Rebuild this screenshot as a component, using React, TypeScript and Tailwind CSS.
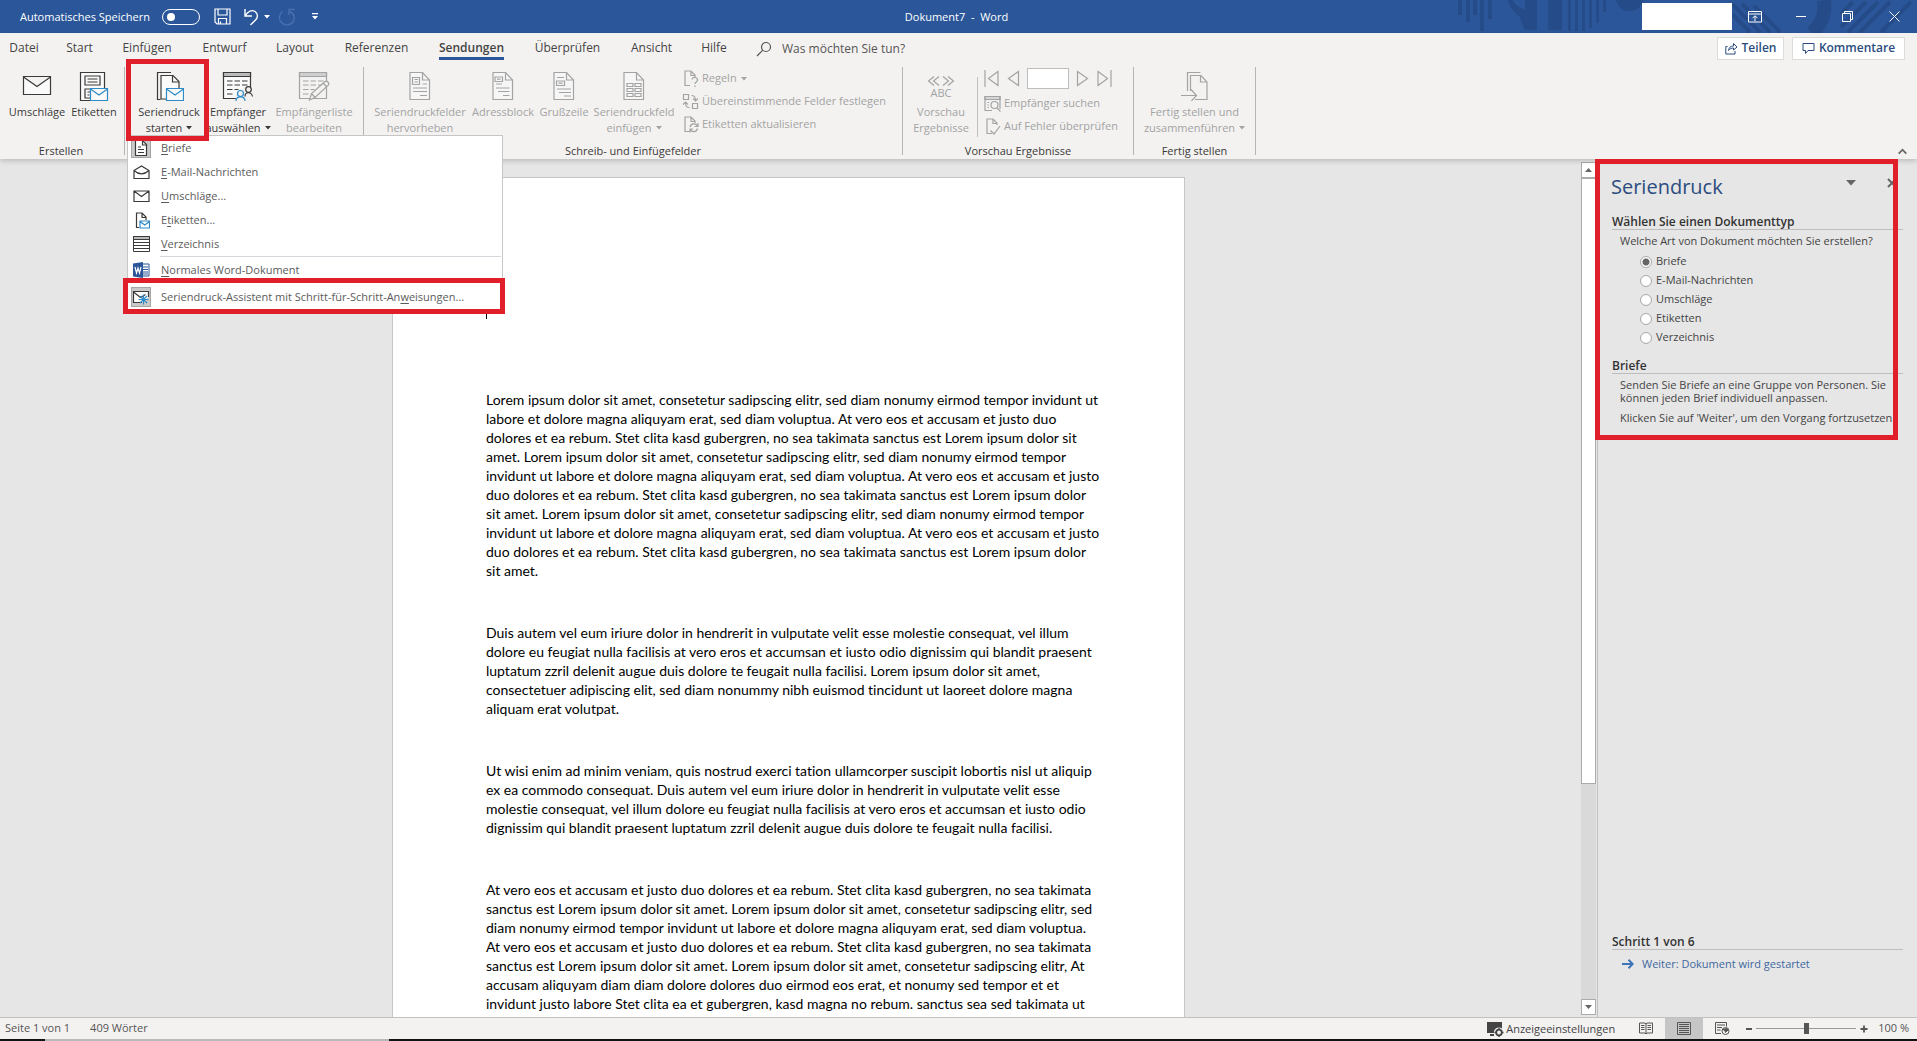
import React from "react";

const P1 = `Lorem ipsum dolor sit amet, consetetur sadipscing elitr, sed diam nonumy eirmod tempor invidunt ut
labore et dolore magna aliquyam erat, sed diam voluptua. At vero eos et accusam et justo duo
dolores et ea rebum. Stet clita kasd gubergren, no sea takimata sanctus est Lorem ipsum dolor sit
amet. Lorem ipsum dolor sit amet, consetetur sadipscing elitr, sed diam nonumy eirmod tempor
invidunt ut labore et dolore magna aliquyam erat, sed diam voluptua. At vero eos et accusam et justo
duo dolores et ea rebum. Stet clita kasd gubergren, no sea takimata sanctus est Lorem ipsum dolor
sit amet. Lorem ipsum dolor sit amet, consetetur sadipscing elitr, sed diam nonumy eirmod tempor
invidunt ut labore et dolore magna aliquyam erat, sed diam voluptua. At vero eos et accusam et justo
duo dolores et ea rebum. Stet clita kasd gubergren, no sea takimata sanctus est Lorem ipsum dolor
sit amet.`;
const P2 = `Duis autem vel eum iriure dolor in hendrerit in vulputate velit esse molestie consequat, vel illum
dolore eu feugiat nulla facilisis at vero eros et accumsan et iusto odio dignissim qui blandit praesent
luptatum zzril delenit augue duis dolore te feugait nulla facilisi. Lorem ipsum dolor sit amet,
consectetuer adipiscing elit, sed diam nonummy nibh euismod tincidunt ut laoreet dolore magna
aliquam erat volutpat.`;
const P3 = `Ut wisi enim ad minim veniam, quis nostrud exerci tation ullamcorper suscipit lobortis nisl ut aliquip
ex ea commodo consequat. Duis autem vel eum iriure dolor in hendrerit in vulputate velit esse
molestie consequat, vel illum dolore eu feugiat nulla facilisis at vero eros et accumsan et iusto odio
dignissim qui blandit praesent luptatum zzril delenit augue duis dolore te feugait nulla facilisi.`;
const P4 = `At vero eos et accusam et justo duo dolores et ea rebum. Stet clita kasd gubergren, no sea takimata
sanctus est Lorem ipsum dolor sit amet. Lorem ipsum dolor sit amet, consetetur sadipscing elitr, sed
diam nonumy eirmod tempor invidunt ut labore et dolore magna aliquyam erat, sed diam voluptua.
At vero eos et accusam et justo duo dolores et ea rebum. Stet clita kasd gubergren, no sea takimata
sanctus est Lorem ipsum dolor sit amet. Lorem ipsum dolor sit amet, consetetur sadipscing elitr, At
accusam aliquyam diam diam dolore dolores duo eirmod eos erat, et nonumy sed tempor et et
invidunt justo labore Stet clita ea et gubergren, kasd magna no rebum. sanctus sea sed takimata ut`;

const DARK = "#3b3a39";
const DIM = "#a3a3a3";
const BLUE = "#2e8bc8";

function Icon({ w, h, color = DARK, children }: { w: number; h: number; color?: string; children: React.ReactNode }) {
  return (
    <svg width={w} height={h} viewBox={`0 0 ${w} ${h}`} fill="none" stroke={color} strokeWidth="1.2" className="shrink-0" aria-hidden="true">
      {children}
    </svg>
  );
}

function Caret() {
  return (
    <svg width="6" height="4" viewBox="0 0 6 4" fill="currentColor" className="ml-1 inline-block shrink-0 align-middle" aria-hidden="true">
      <path d="M0 0h6L3 3.6z" />
    </svg>
  );
}

const EnvelopeIcon = () => (
  <Icon w={30} h={30}>
    <path d="M1.5 5.5h27v18h-27zM1.5 6l13.5 9.5L28.5 6" fill="#fafafa" />
  </Icon>
);
const SmallEnvelope = ({ x, y }: { x: number; y: number }) => (
  <g transform={`translate(${x} ${y})`} stroke={BLUE}>
    <path d="M.5.5h17v12H.5z" fill="#fafafa" />
    <path d="M.5 1L9 7l8.500-6" />
  </g>
);
const LabelsIcon = () => (
  <Icon w={30} h={30}>
    <path d="M1.500 1.500h24v28h-24z" fill="#fafafa" />
    <path d="M6 5h15v9H6zM8.500 8h10M8.500 11h10M12 18H6v9h5M8.500 21h3M8.500 24h2" />
    <SmallEnvelope x={11} y={17} />
  </Icon>
);
const StartIcon = () => (
  <Icon w={30} h={30}>
    <path d="M6.500 28.500H3.500v-27H17" />
    <path d="M7 4.500h12l6 6V28H7z" fill="#fafafa" />
    <path d="M18.500 4.500V11H25" />
    <SmallEnvelope x={12} y={17} />
  </Icon>
);
const SheetBase = ({ fill, head }: { fill: string; head: string }) => (
  <>
    <path d="M1.500 1.500h27v26h-27z" fill={fill} />
    <path d="M1.500 1.500h27v4h-27z" fill={head} />
    <path d="M5 10h5.500M12.500 10H18M20 10h5.500M5 14h5.500M12.500 14H18M20 14h5.500M5 18.500h5.500M12.500 18.500h4M5 23h5.500" />
  </>
);
const RecipientsIcon = () => (
  <Icon w={32} h={30}>
    <SheetBase fill="#fafafa" head="#bbb" />
    <path d="M13.500 21l9-5h9v14H14z" fill="#f3f2f1" stroke="none" />
    <circle cx="26.500" cy="18.500" r="2.800" />
    <path d="M23 25.500c0-5 6.500-5 7.500 0" />
    <circle cx="18.500" cy="22.500" r="3" stroke={BLUE} />
    <path d="M14 30c0-5.500 9-5.500 9 0" stroke={BLUE} />
  </Icon>
);
const EditListIcon = () => (
  <Icon w={32} h={30} color={DIM}>
    <SheetBase fill="#f3f2f1" head="#cfcfcf" />
    <path d="M11.500 29l2-6.500L27 10.500c2-1 4.500 1 3.500 3.500L17 26.500zM25 12l4 4M13.500 22.500l3.500 4" fill="#f3f2f1" />
  </Icon>
);
const PageIcon = ({ kind }: { kind: "merge" | "address" | "greeting" | "field" }) => (
  <Icon w={22} h={30} color={DIM}>
    <path d="M1 1.500h12.500l7 7.500v19.500H1z" fill="#f6f6f6" />
    <path d="M13.500 1.500V9h7" />
    {kind === "merge" && <path d="M3.500 6.500h7v7h-7zM5.500 8.500h3.500M5.500 11h3.500M13.500 13h4.500M4 17h14M4 20.500h14M11 24.500h7" />}
    {kind === "address" && <path d="M3 6h7.500v4.500H3zM5 8.200h3.500M4 13h6M4 17h13.500M6 20.500h11.500M11 24.500h6.500" />}
    {kind === "greeting" && <path d="M4 6.500h7M3.500 10h8v4.500h-8zM5.500 12.200h4M4 18h14M6 21.500h12M11 25h7" />}
    {kind === "field" && <path d="M4 12.500h6v3H4zM12 12.500h6v3h-6zM4 17.500h6v3H4zM12 17.500h6v3h-6zM4 22.500h6v3H4zM12 22.500h6v3h-6z" />}
  </Icon>
);
const FinishIcon = () => (
  <Icon w={30} h={30} color={DIM}>
    <path d="M7.500 20V1.500h13" />
    <path d="M10.500 20V4.500H21l6 6.500v17.500H15" />
    <path d="M20.500 4.500V11H27M1 24.500h15M11 18.500l5.500 6-5.500 6" />
  </Icon>
);
const PreviewIcon = () => (
  <span className="flex flex-col items-center text-[11px] leading-[12px]">
    <svg width="28" height="12" viewBox="0 0 28 12" fill="none" stroke="currentColor" strokeWidth="1.2" className="mt-1" aria-hidden="true">
      <path d="M7 1.500L1.500 6 7 10.500M12 1.500L6.500 6l5.500 4.500M16 1.500L21.500 6 16 10.500M21 1.500L26.500 6 21 10.500" />
    </svg>
    ABC
  </span>
);

function BigButton({ width, icon, l1, l2, caret, dim }: { width: string; icon: React.ReactNode; l1: string; l2?: string; caret?: boolean; dim?: boolean }) {
  return (
    <button className={`${width} flex shrink-0 flex-col items-center whitespace-nowrap text-[11px] leading-4 ${dim ? "text-[#a3a3a3]" : "text-[#3b3a39]"}`}>
      <span className="flex h-[33px] items-start">{icon}</span>
      <span>{l1}</span>
      {l2 && (
        <span className="flex items-center">
          {l2}
          {caret && <Caret />}
        </span>
      )}
    </button>
  );
}

function SmallButton({ icon, label, caret }: { icon: React.ReactNode; label: string; caret?: boolean }) {
  return (
    <button className="flex h-[23px] items-center whitespace-nowrap text-[11px] text-[#a3a3a3]">
      {icon}
      <span className="ml-[3px]">{label}</span>
      {caret && <Caret />}
    </button>
  );
}

function Group({ width, label, children }: { width: string; label?: string; children: React.ReactNode }) {
  return (
    <section className={`${width} flex shrink-0 flex-col justify-between`}>
      <div className="flex pt-1">{children}</div>
      {label && <div className="pb-px text-center text-[11px] leading-[14px] text-[#3b3a39]">{label}</div>}
    </section>
  );
}
const Sep = () => <div className="mx-1.5 mb-1 w-px shrink-0 bg-[#b5b5b5]" />;

const TABS: [string, string][] = [
  ["Datei", "w-12"],
  ["Start", "w-[63px]"],
  ["Einfügen", "w-[72px]"],
  ["Entwurf", "w-[83px]"],
  ["Layout", "w-[58px]"],
  ["Referenzen", "w-[105px]"],
  ["Sendungen", "w-[85px]"],
  ["Überprüfen", "w-[107px]"],
  ["Ansicht", "w-[61px]"],
  ["Hilfe", "w-16"],
];

function TitleBar() {
  return (
    <header className="relative flex h-[33px] shrink-0 items-center justify-between overflow-hidden bg-[#2b579a] text-[11px] text-white">
      <svg width="460" height="33" viewBox="1457 0 460 33" className="absolute top-0 right-0" fill="#254b88" aria-hidden="true">
        <path d="M1458 0h4v15h-4zM1466 0h4v22h-4zM1473 0h4v15h-4zM1480 0h4v31h-4zM1488 0h4v19h-4z" />
        <path d="M1508 0h5c2 6 8 8 12 10V0h12v30h-12c-3-4-3-10-6-14-5-4-9-8-11-16zM1548 0h14v30h-14z" />
        <path d="M1568 0h3v31h-3zM1575 0h3v31h-3zM1582 0h3v31h-3zM1589 0h3v28h-3zM1596 0h3v23h-3zM1603 0h3v12h-3z" />
        <path d="M1616 0h27c-3 15-24 15-27 0z" />
        <g stroke="#254b88" strokeWidth="4" fill="none">
          <path d="M1732 4l28 28M1742 4l28 28M1732 14l18 18M1754 6l26 26" />
          <path d="M1853 2l-12 12M1866 2l-25 25M1878 2l-30 30M1890 2l-30 30M1911 2l-30 30" />
          <path d="M1824 0c2 12-2 24-12 33" strokeWidth="14" />
        </g>
      </svg>
      <div className="relative flex items-center pl-5">
        <span className="leading-8">Automatisches Speichern</span>
        <button role="switch" aria-checked="false" aria-label="Automatisches Speichern" className="ml-3 flex h-4 w-[38px] items-center rounded-full border border-white pl-1">
          <span className="size-2 rounded-full bg-white" />
        </button>
        <button aria-label="Speichern" className="ml-3.5">
          <svg width="17" height="17" viewBox="0 0 17 17" fill="none" stroke="white" strokeWidth="1.2" aria-hidden="true">
            <path d="M1 1h15v15H3l-2-2zM4 1v6h9V1M4.500 16v-5.500h8V16M6.500 16v-2.500" />
          </svg>
        </button>
        <button aria-label="Rückgängig" className="ml-3 flex items-center">
          <svg width="17" height="18" viewBox="0 0 17 18" fill="none" stroke="white" strokeWidth="1.4" aria-hidden="true">
            <path d="M2 1v7h7M2 8C5 3 9 1.500 12 3.500c3.500 2.500 3 6.500 0 9L7.500 17" />
          </svg>
          <svg width="6" height="4" viewBox="0 0 6 4" fill="white" className="ml-1" aria-hidden="true">
            <path d="M0 0h6L3 3.600z" />
          </svg>
        </button>
        <button aria-label="Wiederholen" className="ml-2">
          <svg width="18" height="18" viewBox="0 0 18 18" fill="none" stroke="#4a70af" strokeWidth="1.400" aria-hidden="true">
            <path d="M4.500 3.500C1 6 0 11 3.500 14.500s9 3 11.500-.5c2.500-4 1-8.500-3-10.500M16.500 1.500h-5.500V7" />
          </svg>
        </button>
        <button aria-label="Symbolleiste anpassen" className="ml-4">
          <svg width="6" height="7" viewBox="0 0 6 7" fill="white" aria-hidden="true">
            <path d="M0 0h6v1.200H0zM0 3h6L3 6.500z" />
          </svg>
        </button>
      </div>
      <div className="absolute inset-x-0 pr-1 text-center leading-8 whitespace-pre">Dokument7&nbsp; -&nbsp; Word</div>
      <div className="relative flex items-center">
        <div className="mr-4 h-[27px] w-[90px] bg-white" />
        <button aria-label="Menübandanzeigeoptionen" className="mr-[34px]">
          <svg width="14" height="12" viewBox="0 0 14 12" fill="none" stroke="white" aria-hidden="true">
            <path d="M.5.500h13v10.500H.5zM.5 3h13M7 10V5M4.500 7.200L7 4.700l2.500 2.500" />
          </svg>
        </button>
        <button aria-label="Minimieren" className="mr-9 flex h-3 items-center">
          <span className="block h-px w-2.5 bg-white" />
        </button>
        <button aria-label="Verkleinern" className="mr-9">
          <svg width="11" height="11" viewBox="0 0 11 11" fill="none" stroke="white" aria-hidden="true">
            <path d="M.5 2.500h8v8h-8zM2.500 2.500v-2h8v8h-2" />
          </svg>
        </button>
        <button aria-label="Schließen" className="mr-[17px]">
          <svg width="11" height="11" viewBox="0 0 11 11" fill="none" stroke="white" aria-hidden="true">
            <path d="M.5.5l10 10M10.500.5l-10 10" />
          </svg>
        </button>
      </div>
    </header>
  );
}

function TabRow() {
  return (
    <nav className="flex h-[30px] shrink-0 items-center text-xs text-[#444]">
      {TABS.map(([name, w]) => (
        <button key={name} className={`${w} flex h-full shrink-0 flex-col items-center pt-[7px] whitespace-nowrap`}>
          {name === "Sendungen" ? (
            <span className="border-b-3 border-[#2b579a] pb-px font-semibold">{name}</span>
          ) : (
            <span>{name}</span>
          )}
        </button>
      ))}
      <label className="ml-2.5 flex items-center pt-0.5">
        <svg width="16" height="16" viewBox="0 0 16 16" fill="none" stroke="#555" strokeWidth="1.2" aria-hidden="true">
          <circle cx="10" cy="6" r="4.500" />
          <path d="M6.800 9.200L1 15" />
        </svg>
        <input aria-label="Was möchten Sie tun?" placeholder="Was möchten Sie tun?" className="ml-2.5 w-40 bg-transparent outline-none placeholder:text-[#555]" />
      </label>
      <div className="ml-auto flex gap-2 pr-3 font-semibold text-[#2b4c7e]">
        <button className="flex h-[23px] w-[67px] items-center justify-center gap-1 border border-[#dcdcdc] bg-white">
          <svg width="13" height="13" viewBox="0 0 13 13" fill="none" stroke="#2b4c7e" aria-hidden="true">
            <path d="M2.500 4.500H.8V12H10V9M3.500 8.500c.5-3 2-4.500 5-4.500V1.500L12 5 8.500 8V6c-2 0-3.500.5-5 2.500z" />
          </svg>
          Teilen
        </button>
        <button className="flex h-[23px] w-[113px] items-center justify-center gap-1 border border-[#dcdcdc] bg-white">
          <svg width="13" height="13" viewBox="0 0 13 13" fill="none" stroke="#2b4c7e" aria-hidden="true">
            <path d="M1 1.500h11v7H6l-2.500 3v-3H1z" />
          </svg>
          Kommentare
        </button>
      </div>
    </nav>
  );
}

const SmallPage = ({ children }: { children?: React.ReactNode }) => (
  <Icon w={17} h={17} color={DIM}>
    <path d="M8 15.500H3V1h6l4 4v2M9 1v4.500h4" />
    {children}
  </Icon>
);

function Ribbon() {
  return (
    <div className="flex h-24 shrink-0 pt-1 pl-1">
      <Group width="w-[114px]" label="Erstellen">
        <BigButton width="w-[66px]" icon={<EnvelopeIcon />} l1="Umschläge" />
        <BigButton width="w-12" icon={<LabelsIcon />} l1="Etiketten" />
      </Group>
      <Sep />
      <Group width="w-[226px]">
        <div className="relative ml-[3px] flex">
          <BigButton width="w-[70px]" icon={<StartIcon />} l1="Seriendruck" l2="starten" caret />
          <div className="pointer-events-none absolute -top-3 -left-2 z-30 h-[82px] w-[83px] border-5 border-[#e01f2a]" />
          <StartMenu />
        </div>
        <BigButton width="w-[68px]" icon={<RecipientsIcon />} l1="Empfänger" l2="auswählen" caret />
        <BigButton width="w-[84px]" icon={<EditListIcon />} l1="Empfängerliste" l2="bearbeiten" dim />
      </Group>
      <Sep />
      <Group width="w-[526px]" label="Schreib- und Einfügefelder">
        <BigButton width="w-[100px]" icon={<PageIcon kind="merge" />} l1="Seriendruckfelder" l2="hervorheben" dim />
        <BigButton width="w-[66px]" icon={<PageIcon kind="address" />} l1="Adressblock" dim />
        <BigButton width="w-14" icon={<PageIcon kind="greeting" />} l1="Grußzeile" dim />
        <BigButton width="w-[84px]" icon={<PageIcon kind="field" />} l1="Seriendruckfeld" l2="einfügen" caret dim />
        <div className="-mt-1 ml-1.5 flex flex-col">
          <SmallButton
            icon={
              <SmallPage>
                <path d="M10 9.500c.5-3 5.500-2.500 5.500.5 0 2-2.500 2-2.500 4M13 15.500V17" />
              </SmallPage>
            }
            label="Regeln"
            caret
          />
          <SmallButton
            icon={
              <Icon w={17} h={17} color={DIM}>
                <path d="M1.500 1.500h5v5h-5zM10.500 10.500h5v5h-5zM9.500 2.500c3 0 4 1.500 4 5M11 5.500l2.500 2.500L16 5.500M7.500 14.500c-3 0-4-1.500-4-5M1 11.500L3.500 9 6 11.500" />
              </Icon>
            }
            label="Übereinstimmende Felder festlegen"
          />
          <SmallButton
            icon={
              <SmallPage>
                <path d="M8 11c1-4 6-4 7.500-1M16 7v3.500h-3.500M15.500 12.500c-1 4-6 4-7 1M8 16.500V13h3" />
              </SmallPage>
            }
            label="Etiketten aktualisieren"
          />
        </div>
      </Group>
      <Sep />
      <Group width="w-[218px]" label="Vorschau Ergebnisse">
        <BigButton width="w-16" icon={<PreviewIcon />} l1="Vorschau" l2="Ergebnisse" dim />
        <div className="mt-1.5 ml-1 h-[60px] w-px bg-[#c0c0c0]" />
        <div className="-mt-[7px] ml-1.5 flex flex-col text-[#a3a3a3]">
          <div className="flex h-7 items-center gap-[7px]">
            <button aria-label="Erster Datensatz">
              <Icon w={16} h={17} color={DIM}>
                <path d="M1 0v17M14 1.500L4.500 8.500l9.500 7z" />
              </Icon>
            </button>
            <button aria-label="Vorheriger Datensatz">
              <Icon w={13} h={17} color={DIM}>
                <path d="M11.500 1.500L1.500 8.500l10 7z" />
              </Icon>
            </button>
            <input aria-label="Datensatz" className="h-[21px] w-[42px] border border-[#bdbdbd] bg-white" />
            <button aria-label="Nächster Datensatz">
              <Icon w={13} h={17} color={DIM}>
                <path d="M1.500 1.500l10 7-10 7z" />
              </Icon>
            </button>
            <button aria-label="Letzter Datensatz">
              <Icon w={16} h={17} color={DIM}>
                <path d="M15 0v17M2 1.500l9.500 7-9.500 7z" />
              </Icon>
            </button>
          </div>
          <SmallButton
            icon={
              <Icon w={17} h={17} color={DIM}>
                <path d="M1 1.500h15v3H1z" fill="#d5d5d5" />
                <path d="M8 15.500H1v-14h15V14M3.500 7.500h1.500M3.500 10h1.500M3.500 12.500h1.500M13 13l3.500 3.500" />
                <circle cx="10.500" cy="10" r="3.500" />
              </Icon>
            }
            label="Empfänger suchen"
          />
          <SmallButton
            icon={
              <SmallPage>
                <path d="M6.500 12.500l3.500 3.500 6-8" />
              </SmallPage>
            }
            label="Auf Fehler überprüfen"
          />
        </div>
      </Group>
      <Sep />
      <Group width="w-[109px]" label="Fertig stellen">
        <BigButton width="w-[109px]" icon={<FinishIcon />} l1="Fertig stellen und" l2="zusammenführen" caret dim />
      </Group>
      <Sep />
      <button aria-label="Menüband reduzieren" className="mr-2.5 mb-1 ml-auto self-end">
        <svg width="9" height="7" viewBox="0 0 9 7" fill="none" stroke="#666" strokeWidth="1.800" aria-hidden="true">
          <path d="M.7 5.700l3.800-4 3.800 4" />
        </svg>
      </button>
    </div>
  );
}

function MenuItem({ icon, pre, hot, post, active }: { icon: React.ReactNode; pre?: string; hot: string; post: string; active?: boolean }) {
  return (
    <button role="menuitem" className="flex h-6 w-full items-center whitespace-nowrap">
      <span className={`ml-[3px] flex size-5 shrink-0 items-center justify-center ${active ? "border border-[#a6a6a6] bg-[#c9c9c9]" : ""}`}>{icon}</span>
      <span className="ml-2.5">
        {pre}
        <span className="underline underline-offset-2">{hot}</span>
        {post}
      </span>
    </button>
  );
}

function StartMenu() {
  return (
    <div role="menu" className="absolute top-16 -left-[7px] z-20 flex w-[376px] flex-col border border-[#c6c6c6] bg-white text-[11px] text-[#5c5c5c]">
      <MenuItem
        active
        icon={
          <Icon w={16} h={18}>
            <path d="M2.500 1.500h7l4 4v11h-11z" fill="#fff" />
            <path d="M9.500 1.500v4.500h4M5 8h3M5 10.500h6M5 13.500h6" />
          </Icon>
        }
        hot="B"
        post="riefe"
      />
      <MenuItem
        icon={
          <Icon w={17} h={16}>
            <path d="M1 6.500L8.500 2 16 6.500v8H1zM1 6.500c5 4.500 10 4.500 15 0" />
          </Icon>
        }
        hot="E"
        post="-Mail-Nachrichten"
      />
      <MenuItem
        icon={
          <Icon w={17} h={16}>
            <path d="M1 3h15v10.500H1zM1 3l7.500 5.500L16 3" />
          </Icon>
        }
        hot="U"
        post="mschläge..."
      />
      <MenuItem
        icon={
          <Icon w={17} h={17}>
            <path d="M6 15.500H3.500V1H9l4 4v3M9 1v4.500h4" />
            <path d="M7 9h9.500v7H7zM7 9.500l4.700 3.500 4.800-3.500" stroke={BLUE} fill="#fff" />
          </Icon>
        }
        pre="E"
        hot="t"
        post="iketten..."
      />
      <MenuItem
        icon={
          <Icon w={17} h={17}>
            <path d="M.5.5h16v3H.5z" fill="#bbb" strokeWidth="1" />
            <path d="M.5.5h16v15H.5zM.5 3.500h16M.5 6.500h16M.5 9.500h16M.5 12.500h16" strokeWidth="1" />
          </Icon>
        }
        hot="V"
        post="erzeichnis"
      />
      <div className="mr-px ml-8 h-px bg-[#d5d8dc]" />
      <div className="flex h-[26px] items-center">
        <MenuItem
          icon={
            <svg width="17" height="16" viewBox="0 0 17 16" aria-hidden="true">
              <path d="M9 2h7v12H9z" fill="#fff" stroke="#2b579a" />
              <path d="M10 5h5M10 7.500h5M10 10h5M10 12h5" stroke="#2b579a" />
              <path d="M0 1.500L10 0v16L0 14.500z" fill="#2b579a" />
              <path d="M2 5l1.500 6L5 6l1.500 5L8 5" stroke="#fff" strokeWidth="1.200" fill="none" />
            </svg>
          }
          hot="N"
          post="ormales Word-Dokument"
        />
      </div>
      <div className="relative flex h-7 items-center">
        <MenuItem
          active
          icon={
            <Icon w={18} h={16}>
              <path d="M10 13.500H1.500v-11h15V8" fill="#fff" />
              <path d="M1.500 3l7 5.500 5-3" />
              <path d="M11.500 5.500v10M6.500 10.500h10M8 7l7 7M15 7l-7 7" stroke={BLUE} />
            </Icon>
          }
          pre="Seriendruck-Assistent mit Schritt-für-Schritt-An"
          hot="w"
          post="eisungen..."
        />
        <div className="pointer-events-none absolute -top-[5px] -right-[3px] -bottom-[3px] -left-[5px] border-5 border-[#e01f2a]" />
      </div>
    </div>
  );
}

function PaneHeading({ children }: { children: React.ReactNode }) {
  return <h2 className="mr-3.5 ml-3.5 border-b border-[#bdbdbd] text-xs leading-[15px] font-semibold text-[#333]">{children}</h2>;
}

function TaskPane() {
  return (
    <aside className="relative flex w-[320px] shrink-0 flex-col border-l border-[#c0c0c0] text-[11px] text-[#444]">
      <div className="pointer-events-none absolute top-0 -left-[3px] z-10 h-[281px] w-[303px] border-5 border-[#e01f2a]" />
      <div className="flex items-start pt-3">
        <h1 className="ml-[13px] text-xl leading-8 text-[#2b4c7e]">Seriendruck</h1>
        <button aria-label="Aufgabenbereichoptionen" className="mt-[9px] mr-[31px] ml-auto">
          <svg width="10" height="6" viewBox="0 0 10 6" fill="#666" aria-hidden="true">
            <path d="M0 0h10L5 5.500z" />
          </svg>
        </button>
        <button aria-label="Schließen" className="mt-[7px] mr-5">
          <svg width="10" height="10" viewBox="0 0 10 10" fill="none" stroke="#666" strokeWidth="2" aria-hidden="true">
            <path d="M1 1l8 8M9 1L1 9" />
          </svg>
        </button>
      </div>
      <div className="mt-[11px]">
        <PaneHeading>Wählen Sie einen Dokumenttyp</PaneHeading>
      </div>
      <fieldset className="mt-[3px] ml-[22px]">
        <legend className="leading-[15px]">Welche Art von Dokument möchten Sie erstellen?</legend>
        <div className="mt-1 ml-5">
          {["Briefe", "E-Mail-Nachrichten", "Umschläge", "Etiketten", "Verzeichnis"].map((name, i) => (
            <label key={name} className="flex h-[19px] items-center gap-1">
              <input
                type="radio"
                name="doctype"
                defaultChecked={i === 0}
                className="size-3 appearance-none rounded-full border border-[#ababab] bg-white bg-clip-padding checked:bg-[radial-gradient(circle,#666_0_3px,#fff_4px)]"
              />
              {name}
            </label>
          ))}
        </div>
      </fieldset>
      <div className="mt-[11px]">
        <PaneHeading>Briefe</PaneHeading>
      </div>
      <p className="mt-1 ml-[22px] leading-[13px] whitespace-pre">{"Senden Sie Briefe an eine Gruppe von Personen. Sie\nkönnen jeden Brief individuell anpassen."}</p>
      <p className="mt-[7px] ml-[22px] leading-[13px] whitespace-nowrap">Klicken Sie auf &#39;Weiter&#39;, um den Vorgang fortzusetzen.</p>
      <div className="mt-auto pb-[45px]">
        <PaneHeading>Schritt 1 von 6</PaneHeading>
        <a href="#weiter" className="mt-1.5 ml-6 flex items-center gap-2 leading-4 text-[#41689f]">
          <svg width="12" height="10" viewBox="0 0 12 10" fill="none" stroke="#3f74b8" strokeWidth="2" aria-hidden="true">
            <path d="M0 5h10.500M6.500.8L10.700 5 6.500 9.200" />
          </svg>
          Weiter: Dokument wird gestartet
        </a>
      </div>
    </aside>
  );
}

function ScrollBar() {
  return (
    <div className="mt-[3px] mr-px mb-0.5 flex w-[15px] shrink-0 flex-col bg-[#d9d9d9]">
      <button aria-label="Nach oben" className="flex h-4 shrink-0 items-center justify-center border border-[#ababab] bg-white">
        <svg width="7" height="4" viewBox="0 0 7 4" fill="#666" aria-hidden="true">
          <path d="M0 4h7L3.500 0z" />
        </svg>
      </button>
      <div className="h-[71%] border border-[#ababab] bg-white" />
      <button aria-label="Nach unten" className="mt-auto flex h-4 shrink-0 items-center justify-center border border-[#ababab] bg-white">
        <svg width="7" height="4" viewBox="0 0 7 4" fill="#666" aria-hidden="true">
          <path d="M0 0h7L3.500 4z" />
        </svg>
      </button>
    </div>
  );
}

function StatusBar() {
  return (
    <footer className="flex h-[22px] shrink-0 items-center border-t border-[#c0c0c0] bg-[#f3f2f1] text-[11px] leading-[18px] text-[#555]">
      <span className="mb-0.5 ml-[5px]">Seite 1 von 1</span>
      <span className="mb-0.5 ml-5">409 Wörter</span>
      <button className="ml-auto flex items-center gap-0.5 text-[#444]">
        <svg width="17" height="16" viewBox="0 0 17 16" fill="#444" aria-hidden="true">
          <path d="M0 1h15v6.500A5 5 0 0 0 7 12H0zM3 13h4v2H3z" />
          <circle cx="12" cy="11.500" r="2.800" fill="none" stroke="#444" strokeWidth="1.800" />
          <path d="M11.300 7h1.400v2h-1.400zM11.300 14h1.400v2h-1.400zM7.500 10.800h2v1.400h-2zM14.500 10.800h2v1.400h-2z" />
        </svg>
        Anzeigeeinstellungen
      </button>
      <button aria-label="Lesemodus" className="ml-6">
        <svg width="14" height="13" viewBox="0 0 14 13" fill="none" stroke="#555" aria-hidden="true">
          <path d="M7 1.500v10.500M.5 1h5.500L7 2l1-1h5.500v10H8L7 12l-1-1H.5zM2 3.500h3.500M2 5.500h3.500M2 7.500h3.500M8.500 3.500H12M8.500 5.500H12M8.500 7.500H12" />
        </svg>
      </button>
      <button aria-label="Seitenlayout" className="ml-3 flex h-full w-[38px] items-center justify-center bg-[#c6c6c6]">
        <svg width="14" height="13" viewBox="0 0 14 13" fill="none" stroke="#555" aria-hidden="true">
          <path d="M.5.500h13v12H.5zM2 2.500h10M2 4.500h10M2 6.500h10M2 8.500h10M2 10.500h10" />
        </svg>
      </button>
      <button aria-label="Weblayout" className="ml-3">
        <svg width="15" height="13" viewBox="0 0 15 13" fill="none" stroke="#555" aria-hidden="true">
          <path d="M6 11.500H.5V.5h11v4M2 3h8M2 5.500h5M2 8h3.500" />
          <circle cx="10.500" cy="9" r="3.500" />
          <path d="M8 7.500l2 1 .5 2 2.500-2.500-1.500-1.500z" fill="#555" />
        </svg>
      </button>
      <button aria-label="Verkleinern" className="ml-4 h-0.5 w-1.5 bg-[#555]" />
      <input
        type="range"
        aria-label="Zoom"
        min="10"
        max="190"
        defaultValue="100"
        className="mx-1 h-3 w-[100px] appearance-none bg-[linear-gradient(#999,#999)] bg-[length:100%_1px] bg-center bg-no-repeat [&::-webkit-slider-thumb]:h-[11px] [&::-webkit-slider-thumb]:w-[5px] [&::-webkit-slider-thumb]:appearance-none [&::-webkit-slider-thumb]:bg-[#555]"
      />
      <button aria-label="Vergrößern">
        <svg width="8" height="8" viewBox="0 0 8 8" stroke="#555" strokeWidth="1.800" aria-hidden="true">
          <path d="M4 .5v7M.5 4h7" />
        </svg>
      </button>
      <span className="mr-2 mb-0.5 ml-2.5">100 %</span>
    </footer>
  );
}

export default function App() {
  return (
    <div className="flex h-screen flex-col overflow-hidden bg-[#e6e6e6] font-['Open_Sans','Noto_Sans',sans-serif]">
      <TitleBar />
      <div className="relative z-20 flex flex-col bg-[#f3f2f1] shadow-[0_2px_5px_rgba(0,0,0,0.18)]">
        <TabRow />
        <Ribbon />
      </div>
      <div className="flex min-h-0 flex-1">
        <main className="flex min-w-0 flex-1 justify-center overflow-hidden pr-1">
          <article className="mt-[18px] w-[793px] shrink-0 border border-b-0 border-[#c6c6c6] bg-white px-[93px] pt-[132px] font-['Lato','Liberation_Sans',sans-serif] text-sm leading-[19px] text-black [font-variant-ligatures:none]">
            <div className="h-20">
              <span className="block h-[9px] w-px bg-black" />
            </div>
            <div className="flex flex-col gap-[43px] whitespace-pre">
              <p>{P1}</p>
              <p>{P2}</p>
              <p>{P3}</p>
              <p>{P4}</p>
            </div>
          </article>
        </main>
        <ScrollBar />
        <div className="relative z-30 flex shrink-0">
          <TaskPane />
        </div>
      </div>
      <StatusBar />
      <div className="flex h-0.5 shrink-0 bg-[#111]">
        <div className="ml-[45px] w-[344px] bg-[#b9b9b9]" />
      </div>
    </div>
  );
}
